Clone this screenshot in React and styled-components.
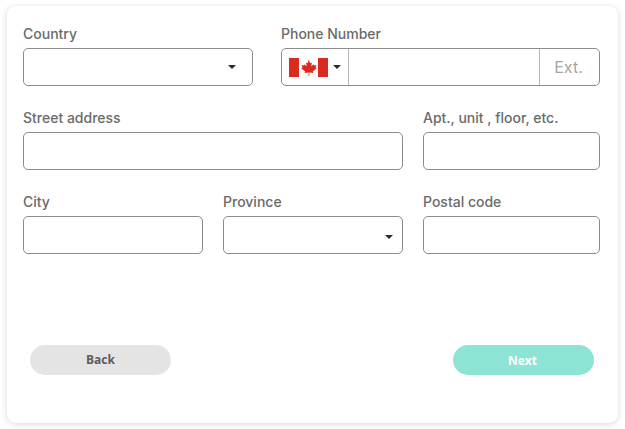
import React from 'react';
import styled, { createGlobalStyle } from 'styled-components';

const GlobalStyle = createGlobalStyle`
  html, body {
    margin: 0;
    padding: 0;
    background: #fff;
    font-family: Inter, "Liberation Sans", sans-serif;
  }
`;

const Page = styled.div`
  width: 625px;
  height: 429px;
  padding: 6px 7px;
  box-sizing: border-box;
  overflow: hidden;
`;

const Card = styled.div`
  height: 417px;
  box-sizing: border-box;
  padding: 19px 18px 0 16px;
  background: #fff;
  border-radius: 9px;
  box-shadow: 0 1px 6px rgba(0, 0, 0, 0.16);
`;

const Row = styled.div`
  display: flex;
  gap: ${(p) => p.$gap || 20}px;
  margin-bottom: 23px;
`;

const Field = styled.div`
  width: ${(p) => p.$width}px;
  flex-shrink: 0;
`;

const Label = styled.label`
  display: block;
  height: 23px;
  font-size: 14px;
  line-height: 18px;
  font-weight: 500;
  color: #6a6a6a;
`;

const Control = styled.div`
  display: flex;
  align-items: center;
  justify-content: flex-end;
  height: 38px;
  box-sizing: border-box;
  border: 1px solid #8c8c8c;
  border-radius: 5px;
  background: #fff;
  padding-right: ${(p) => p.$caretInset || 0}px;
  padding-top: ${(p) => (p.$low ? 3 : 0)}px;
`;

const PhoneControl = styled(Control)`
  justify-content: flex-start;
`;

const FlagCell = styled.div`
  display: flex;
  align-items: center;
  width: 67px;
  height: 100%;
  box-sizing: border-box;
  padding-left: 7px;
  gap: 5px;
  border-right: 1px solid #b5b5b5;
`;

const NumberCell = styled.div`
  flex: 1;
`;

const ExtCell = styled.div`
  width: 60px;
  height: 100%;
  box-sizing: border-box;
  padding-right: 2px;
  border-left: 1px solid #b5b5b5;
  font-size: 16px;
  line-height: 36px;
  text-align: center;
  color: #a6a6a6;
`;

const Caret = styled.span`
  width: 0;
  height: 0;
  border-left: 4px solid transparent;
  border-right: 4px solid transparent;
  border-top: 4px solid #2a2a2a;
`;

const Actions = styled.div`
  display: flex;
  justify-content: space-between;
  padding: 68px 6px 0 7px;
`;

const Pill = styled.button`
  width: 141px;
  height: 30px;
  border: 0;
  border-radius: 15px;
  padding: 0 ${(p) => (p.$primary ? 2 : 0)}px ${(p) => (p.$primary ? 0 : 2)}px 0;
  background: ${(p) => (p.$primary ? '#8ee4d4' : '#e4e4e4')};
  color: ${(p) => (p.$primary ? '#fff' : '#5c5c5c')};
  font-family: "Open Sans", sans-serif;
  font-size: 12px;
  font-weight: 700;
`;

const CanadaFlag = () => (
  <svg width="39" height="19" viewBox="0 0 39 19">
    <rect width="39" height="19" fill="#fff" />
    <rect width="10" height="19" fill="#d92b1f" />
    <rect x="29" width="10" height="19" fill="#d92b1f" />
    <path
      d="M19.5 2l1.8 3.2 1.6-.8-.7 4 2.2-2.2.5 1.3 2.5-.5-.8 2.6 1.2.6-4 3.2.5 1.5-4-.4.1 3.5h-.8l.1-3.5-4 .4.5-1.5-4-3.2 1.2-.6-.8-2.6 2.5.5.5-1.3 2.2 2.2-.7-4 1.6.8z"
      fill="#d92b1f"
    />
  </svg>
);

const App = () => (
  <Page>
    <GlobalStyle />
    <Card>
      <Row $gap={28}>
        <Field $width={230}>
          <Label>Country</Label>
          <Control $caretInset={16}><Caret /></Control>
        </Field>
        <Field $width={319}>
          <Label>Phone Number</Label>
          <PhoneControl>
            <FlagCell>
              <CanadaFlag />
              <Caret />
            </FlagCell>
            <NumberCell />
            <ExtCell>Ext.</ExtCell>
          </PhoneControl>
        </Field>
      </Row>
      <Row>
        <Field $width={380}>
          <Label>Street address</Label>
          <Control />
        </Field>
        <Field $width={177}>
          <Label>Apt., unit , floor, etc.</Label>
          <Control />
        </Field>
      </Row>
      <Row>
        <Field $width={180}>
          <Label>City</Label>
          <Control />
        </Field>
        <Field $width={180}>
          <Label>Province</Label>
          <Control $caretInset={9} $low><Caret /></Control>
        </Field>
        <Field $width={177}>
          <Label>Postal code</Label>
          <Control />
        </Field>
      </Row>
      <Actions>
        <Pill>Back</Pill>
        <Pill $primary>Next</Pill>
      </Actions>
    </Card>
  </Page>
);

export default App;
